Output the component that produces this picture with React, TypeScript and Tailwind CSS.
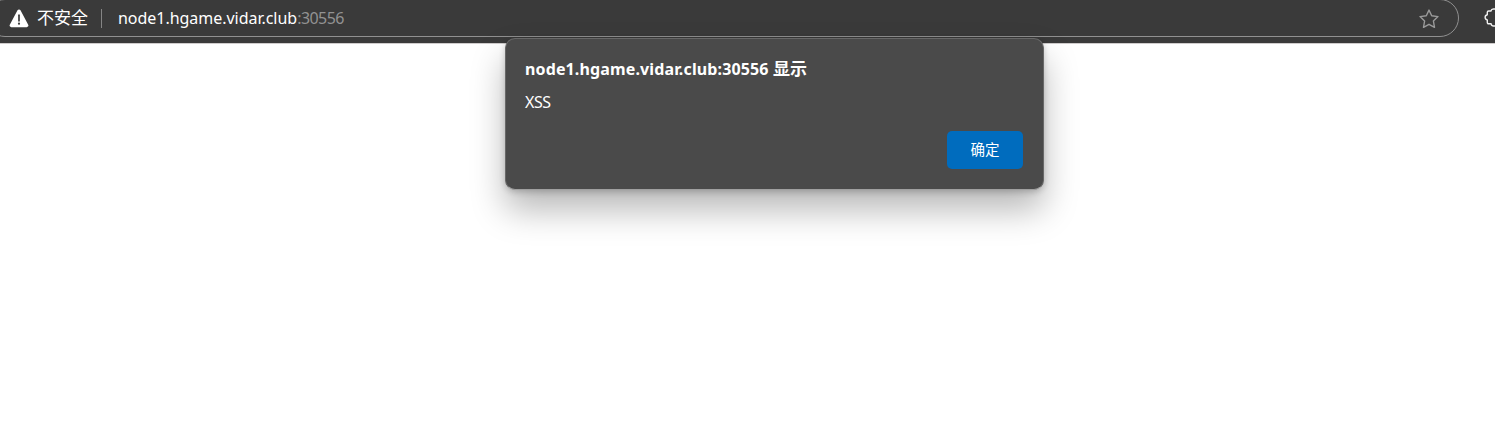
function WarningIcon() {
  return (
    <svg className="h-[19px] w-5 shrink-0" viewBox="0 0 20 19">
      <path
        d="M8.5 1.3a1.7 1.7 0 0 1 3 0l7.7 14.4a1.7 1.7 0 0 1-1.5 2.5H2.3a1.7 1.7 0 0 1-1.5-2.5z"
        fill="#fff"
      />
      <path d="M10 6.2v5.6" stroke="#3b3b3b" strokeWidth="1.7" strokeLinecap="round" />
      <circle cx="10" cy="14.7" r="1.1" fill="#3b3b3b" />
    </svg>
  );
}

function StarIcon() {
  return (
    <svg className="mt-px h-5 w-5 shrink-0" viewBox="0 0 20 20" fill="none" stroke="#9a9a9a" strokeWidth="1.4" strokeLinejoin="round">
      <path d="M10 1.1 12.7 6.8 19 7.6 14.4 12l1.1 6.3L10 15.3l-5.5 3L5.6 12 1 7.6l6.3-.8z" />
    </svg>
  );
}

function ExtensionIcon() {
  return (
    <svg className="h-5 w-[11px] shrink-0" viewBox="0 0 11 20" fill="none" stroke="#f0f0f0" strokeWidth="1.4" strokeLinejoin="round">
      <path d="M12 1H9.5a2.6 2.6 0 0 0-2.6 2H4.6a1.3 1.3 0 0 0-1.3 1.3v2.4a2.7 2.7 0 0 0 0 5.3v2.5a1.3 1.3 0 0 0 1.3 1.3h2.5A2.6 2.6 0 0 0 9.6 18H12" />
    </svg>
  );
}

function AddressBar() {
  return (
    <header className="flex h-[44px] w-full overflow-hidden border-b border-[#cfcccc] bg-[#3a3a3a]">
      <div className="-mt-px -ml-[14px] flex h-[38px] w-[1473px] shrink-0 items-center rounded-full border border-[#909090] pr-[19px] pl-[22px]">
        <WarningIcon />
        <span className="ml-2 w-[51px] shrink-0 text-[17px] leading-6 whitespace-nowrap text-white">不安全</span>
        <div className="ml-[13px] h-[19px] w-px bg-[#858585]" />
        <div className="ml-4 flex-1 text-[16px] leading-6 whitespace-nowrap text-[#929292]">
          <span className="tracking-[-0.03px] text-white">node1.hgame.vidar.club</span>
          <span className="tracking-[-0.55px]">:30556</span>
        </div>
        <StarIcon />
      </div>
      <div className="ml-[25px] pt-2">
        <ExtensionIcon />
      </div>
    </header>
  );
}

function AlertDialog() {
  return (
    <section
      role="dialog"
      className="absolute top-[38px] left-[505px] flex h-[152px] w-[539px] flex-col rounded-[10px] border border-[#686868] border-b-[#a0a0a0] bg-[#4a4a4a] px-[19px] text-white shadow-[0_20px_34px_rgba(0,0,0,0.28),0_2px_6px_rgba(0,0,0,0.2)]"
    >
      <h1 className="mt-[18px] text-[16px] leading-6 font-bold tracking-[0.13px] whitespace-nowrap">
        node1.hgame.vidar.club:30556 <span className="text-[17px]">显示</span>
      </h1>
      <p className="mt-[9px] text-[16px] leading-6 tracking-[-0.5px]">XSS</p>
      <button className="mt-[17px] mr-px h-[38px] w-[76px] self-end rounded-[5px] bg-[#006cbe] text-[14.5px]">确定</button>
    </section>
  );
}

export default function App() {
  return (
    <main className="relative h-[427px] w-full overflow-hidden bg-white font-['Noto_Sans','Noto_Sans_CJK_SC',sans-serif]">
      <AddressBar />
      <AlertDialog />
    </main>
  );
}
